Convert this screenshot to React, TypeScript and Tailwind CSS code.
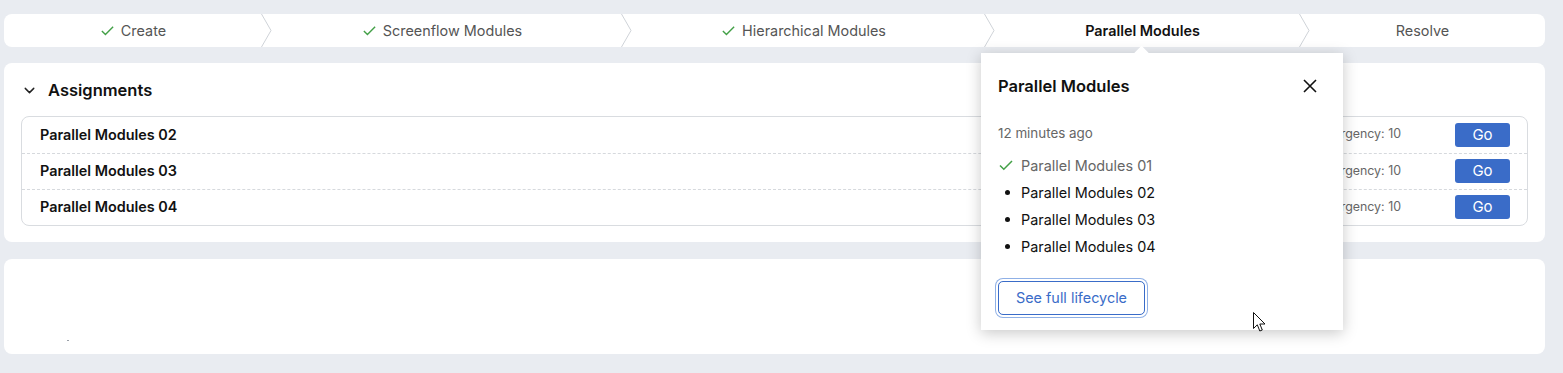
import { ChevronDown } from "lucide-react";

const steps = [
  { label: "Create", width: "w-[258px]", done: true, active: false },
  { label: "Screenflow Modules", width: "w-[360px]", done: true, active: false },
  { label: "Hierarchical Modules", width: "w-[363px]", done: true, active: false },
  { label: "Parallel Modules", width: "w-[315px]", done: false, active: true },
  { label: "Resolve", width: "w-[245px]", done: false, active: false },
];

const assignments = ["Parallel Modules 02", "Parallel Modules 03", "Parallel Modules 04"];

function Check({ className }: { className?: string }) {
  return (
    <svg viewBox="0 0 16 16" className={className} fill="none" stroke="#43a047" strokeWidth="1.5">
      <path d="M2 8.5l3.8 3.8L14 4" />
    </svg>
  );
}

function Stepper() {
  return (
    <div className="flex h-[33px] rounded-lg bg-white">
      {steps.map((step, i) => (
        <div key={step.label} className={`relative flex items-center justify-center ${step.width}`}>
          <span
            className={`flex items-center gap-[6px] text-[14.4px] ${
              step.active ? "font-semibold text-[#111]" : "text-[#555]"
            }`}
          >
            {step.done && <Check className="h-[15px] w-[15px]" />}
            {step.label}
          </span>
          {i < steps.length - 1 && (
            <svg
              viewBox="0 0 11 33"
              className="absolute right-[-10px] top-0 z-10 h-[33px] w-[11px]"
              fill="none"
              stroke="#cfd3d8"
              strokeWidth="1"
            >
              <path d="M0.5 0L10 16.5L0.5 33" />
            </svg>
          )}
        </div>
      ))}
    </div>
  );
}

function AssignmentsCard() {
  return (
    <div className="mt-[16px] h-[179px] rounded-lg bg-white px-[17px] pt-[15px]">
      <div className="flex items-center gap-[10px]">
        <ChevronDown className="h-[17px] w-[17px] text-[#222]" strokeWidth={2} />
        <h2 className="text-[16.5px] font-semibold text-[#111]">Assignments</h2>
      </div>
      <div className="mt-[13px] rounded-lg border border-[#d9dce0]">
        {assignments.map((name, i) => (
          <div
            key={name}
            className={`flex h-[36px] items-center justify-between pl-[18px] pr-[17px] ${
              i > 0 ? "border-t border-dashed border-[#d6d9dd]" : ""
            }`}
          >
            <span className="text-[14.4px] font-semibold text-[#111]">{name}</span>
            <div className="flex items-center gap-[54px]">
              <span className="text-[12.4px] text-[#666]">Urgency: 10</span>
              <button className="h-[24px] w-[55px] rounded-[3px] bg-[#3a6cc8] text-[15px] text-white">Go</button>
            </div>
          </div>
        ))}
      </div>
    </div>
  );
}

function Popover() {
  const items = ["Parallel Modules 02", "Parallel Modules 03", "Parallel Modules 04"];
  return (
    <div className="absolute left-[981px] top-[53px] z-20 h-[277px] w-[362px] bg-white shadow-[0_3px_14px_rgba(0,0,0,0.22)]">
      <div className="absolute left-[155px] top-[-5px] h-[11px] w-[11px] rotate-45 bg-white" />
      <div className="relative px-[17px] pt-[21px]">
        <div className="flex items-center justify-between">
          <h3 className="text-[16.5px] font-semibold text-[#111]">Parallel Modules</h3>
          <svg viewBox="0 0 16 16" className="mr-[8px] h-[16px] w-[16px]" fill="none" stroke="#111" strokeWidth="1.6">
            <path d="M2 2l12 12M14 2L2 14" />
          </svg>
        </div>
        <p className="mt-[24px] text-[13.4px] text-[#666]">12 minutes ago</p>
        <ul className="mt-[9px] text-[14.4px]">
          <li className="flex h-[27px] items-center gap-[7px] text-[#666]">
            <Check className="h-[16px] w-[16px]" />
            Parallel Modules 01
          </li>
          {items.map((item) => (
            <li key={item} className="flex h-[27px] items-center text-[#111]">
              <span className="ml-[7px] mr-[11px] h-[5px] w-[5px] rounded-full bg-[#111]" />
              {item}
            </li>
          ))}
        </ul>
        <button className="mt-[21px] h-[34px] w-[147px] rounded-[5px] border border-[#3a6cc8] text-[14.4px] text-[#3a6cc8] shadow-[0_0_0_2px_#fff,0_0_0_3px_#8fb0e6]">
          See full lifecycle
        </button>
      </div>
    </div>
  );
}

function Cursor() {
  return (
    <svg viewBox="0 0 13 21" className="absolute left-[1253px] top-[312px] z-30 h-[21px] w-[13px]">
      <path
        d="M0.5 0.5V16.5L4.3 12.8L6.8 19L9.3 18L6.8 12H12L0.5 0.5Z"
        fill="#fff"
        stroke="#111"
        strokeWidth="1"
        strokeLinejoin="round"
      />
    </svg>
  );
}

export default function App() {
  return (
    <div
      className="relative h-[373px] w-full overflow-hidden bg-[#e9ecf1] pl-[4px] pr-[18px] pt-[14px]"
      style={{ fontFamily: "Inter, 'Noto Sans', sans-serif" }}
    >
      <Stepper />
      <AssignmentsCard />
      <div className="relative mt-[17px] h-[95px] rounded-lg bg-white">
        <span className="absolute left-[63px] top-[81px] h-[1px] w-[2px] bg-[#9aa0a8]" />
      </div>
      <Popover />
      <Cursor />
    </div>
  );
}
